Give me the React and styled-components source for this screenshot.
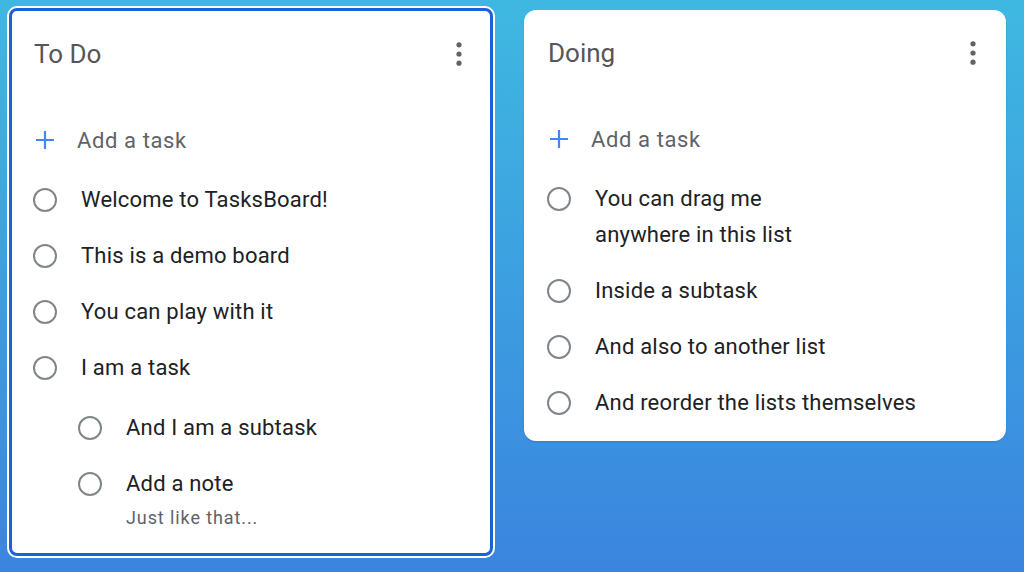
import React from 'react';
import styled, { createGlobalStyle } from 'styled-components';

const GlobalStyle = createGlobalStyle`
  html, body {
    margin: 0;
    padding: 0;
  }
  body {
    font-family: Roboto, "Noto Sans", "Liberation Sans", sans-serif;
    -webkit-font-smoothing: antialiased;
  }
`;

const Board = styled.div`
  display: flex;
  align-items: flex-start;
  gap: 31px;
  box-sizing: border-box;
  min-height: 100vh;
  padding: 8px 9px;
  background: linear-gradient(180deg, #3fb8e1 0%, #3c9fe0 50%, #3b84df 100%);
`;

const Card = styled.section`
  width: ${({ $focused }) => ($focused ? '484px' : '482px')};
  box-sizing: border-box;
  margin-top: ${({ $focused }) => ($focused ? '0' : '2px')};
  padding: ${({ $focused }) => ($focused ? '0 21px 13px' : '0 23px 10px')};
  background: #fff;
  border-radius: ${({ $focused }) => ($focused ? '8px' : '12px')};
  border: ${({ $focused }) => ($focused ? '3px solid #1b62d7' : 'none')};
  box-shadow: ${({ $focused }) =>
    $focused ? '0 0 0 2px #ffffff' : '0 1px 2px rgba(0, 0, 0, 0.12)'};
`;

const Header = styled.header`
  display: flex;
  align-items: center;
  justify-content: space-between;
  height: 84px;
  padding-top: ${({ $focused }) => ($focused ? '1px' : '2px')};
  box-sizing: border-box;
`;

const Title = styled.h2`
  margin: 0;
  padding-left: 1px;
  font-size: 26px;
  font-weight: 400;
  line-height: 32px;
  color: #555659;
`;

const MenuButton = styled.button`
  display: flex;
  align-items: center;
  justify-content: center;
  width: 24px;
  height: 32px;
  margin-right: -2px;
  padding: 0;
  border: none;
  background: none;
  color: #5f6368;
`;

const AddRow = styled.div`
  display: flex;
  align-items: center;
  gap: 20px;
  height: 64px;
  margin-top: 13px;
  color: #5f6368;
  font-size: 22px;
  letter-spacing: 0.6px;
`;

const IconSlot = styled.span`
  display: flex;
  align-items: center;
  justify-content: center;
  width: 24px;
  flex-shrink: 0;
`;

const TaskRow = styled.div`
  display: flex;
  align-items: flex-start;
  gap: 24px;
  padding: 10px 0;
`;

const Subtasks = styled.div`
  padding: 4px 0 0 45px;
`;

const Check = styled.span`
  width: 24px;
  height: 24px;
  margin-top: 6px;
  box-sizing: border-box;
  border: 2px solid #80868b;
  border-radius: 50%;
  flex-shrink: 0;
`;

const TaskBody = styled.div`
  display: flex;
  flex-direction: column;
`;

const TaskText = styled.span`
  font-size: 22px;
  line-height: 36px;
  letter-spacing: 0.2px;
  color: #202124;
`;

const Note = styled.span`
  margin-top: 4px;
  font-size: 18px;
  line-height: 24px;
  letter-spacing: 0.9px;
  color: #5f6368;
`;

function Kebab() {
  return (
    <svg width="6" height="24" viewBox="0 0 6 24">
      <circle cx="3" cy="2.8" r="2.6" fill="currentColor" />
      <circle cx="3" cy="12" r="2.6" fill="currentColor" />
      <circle cx="3" cy="21.2" r="2.6" fill="currentColor" />
    </svg>
  );
}

function Plus() {
  return (
    <svg width="20" height="20" viewBox="0 0 20 20">
      <path d="M10 1v18M1 10h18" stroke="#4285f4" strokeWidth="2.2" />
    </svg>
  );
}

const lists = [
  {
    title: 'To Do',
    focused: true,
    tasks: [
      { text: 'Welcome to TasksBoard!' },
      { text: 'This is a demo board' },
      { text: 'You can play with it' },
      {
        text: 'I am a task',
        subtasks: [
          { text: 'And I am a subtask' },
          { text: 'Add a note', note: 'Just like that...' },
        ],
      },
    ],
  },
  {
    title: 'Doing',
    tasks: [
      { text: ['You can drag me', 'anywhere in this list'] },
      { text: 'Inside a subtask' },
      { text: 'And also to another list' },
      { text: 'And reorder the lists themselves' },
    ],
  },
];

function Task({ task }) {
  return (
    <TaskRow>
      <Check />
      <TaskBody>
        {Array.isArray(task.text) ? (
          task.text.map((line) => <TaskText key={line}>{line}</TaskText>)
        ) : (
          <TaskText>{task.text}</TaskText>
        )}
        {task.note && <Note>{task.note}</Note>}
      </TaskBody>
    </TaskRow>
  );
}

function TaskList({ list }) {
  return (
    <Card $focused={list.focused}>
      <Header $focused={list.focused}>
        <Title>{list.title}</Title>
        <MenuButton>
          <Kebab />
        </MenuButton>
      </Header>
      <AddRow>
        <IconSlot>
          <Plus />
        </IconSlot>
        Add a task
      </AddRow>
      {list.tasks.map((task, i) => (
        <React.Fragment key={i}>
          <Task task={task} />
          {task.subtasks && (
            <Subtasks>
              {task.subtasks.map((sub, j) => (
                <Task key={j} task={sub} />
              ))}
            </Subtasks>
          )}
        </React.Fragment>
      ))}
    </Card>
  );
}

export default function App() {
  return (
    <>
      <GlobalStyle />
      <Board>
        {lists.map((list) => (
          <TaskList key={list.title} list={list} />
        ))}
      </Board>
    </>
  );
}
